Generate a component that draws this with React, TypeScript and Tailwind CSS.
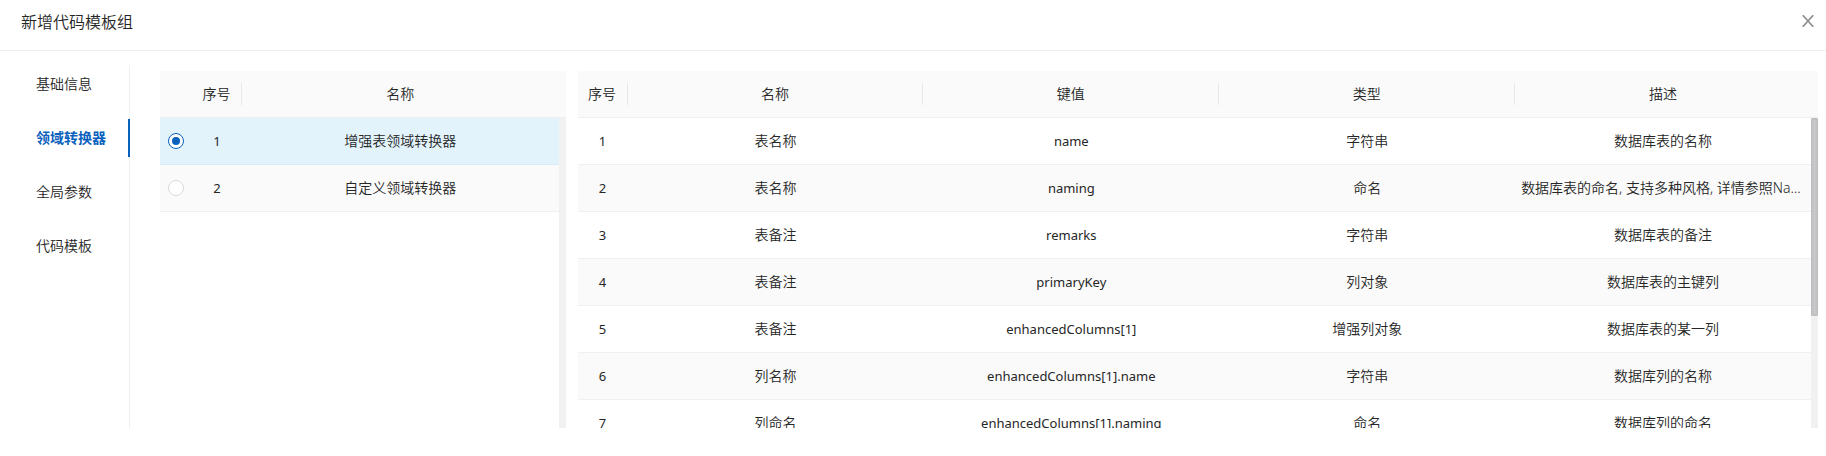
import { useState } from "react";

const tabs = ["基础信息", "领域转换器", "全局参数", "代码模板"];

const converters = [
  { id: 1, name: "增强表领域转换器" },
  { id: 2, name: "自定义领域转换器" },
];

const fields = [
  { id: 1, name: "表名称", key: "name", type: "字符串", desc: "数据库表的名称" },
  { id: 2, name: "表名称", key: "naming", type: "命名", desc: "数据库表的命名, 支持多种风格, 详情参照NamingStrategy" },
  { id: 3, name: "表备注", key: "remarks", type: "字符串", desc: "数据库表的备注" },
  { id: 4, name: "表备注", key: "primaryKey", type: "列对象", desc: "数据库表的主键列" },
  { id: 5, name: "表备注", key: "enhancedColumns[1]", type: "增强列对象", desc: "数据库表的某一列" },
  { id: 6, name: "列名称", key: "enhancedColumns[1].name", type: "字符串", desc: "数据库列的名称" },
  { id: 7, name: "列命名", key: "enhancedColumns[1].naming", type: "命名", desc: "数据库列的命名" },
];

function HeadCell({ label, divider = true }: { label: string; divider?: boolean }) {
  return (
    <th scope="col" className="p-0 font-[350]">
      <div className={`flex h-[22px] items-center justify-center ${divider ? "border-r border-[#e8e8e8]" : ""}`}>
        {label}
      </div>
    </th>
  );
}

function Cell({ children }: { children: React.ReactNode }) {
  return <td className="truncate px-[6px] py-0 text-center">{children}</td>;
}

function LatinCell({ children }: { children: React.ReactNode }) {
  return <td className="truncate px-[6px] py-0 text-center text-[13px] font-normal">{children}</td>;
}

function ConverterColumns() {
  return (
    <colgroup>
      <col className="w-8" />
      <col className="w-[50px]" />
      <col />
    </colgroup>
  );
}

function FieldColumns() {
  return (
    <colgroup>
      <col className="w-[50px]" />
      <col />
      <col />
      <col />
      <col />
    </colgroup>
  );
}

function ConverterTable() {
  const [selected, setSelected] = useState(1);
  return (
    <section aria-label="领域转换器" className="min-w-0">
      <div className="rounded-t-xs border-b border-[#f0f0f0] bg-[#fafafa] pr-[7px]">
        <table className="w-full table-fixed border-collapse">
          <ConverterColumns />
          <thead>
            <tr className="h-[46px]">
              <td />
              <HeadCell label="序号" />
              <HeadCell label="名称" divider={false} />
            </tr>
          </thead>
        </table>
      </div>
      <div className="flex h-[310px]">
        <div className="min-w-0 flex-1 overflow-y-auto [scrollbar-width:none]">
          <table className="w-full table-fixed border-separate border-spacing-0">
            <ConverterColumns />
            <tbody>
              {converters.map((c) => (
                <tr
                  key={c.id}
                  className={
                    selected === c.id
                      ? "h-[47px] bg-[#e2f3fc] *:border-b *:border-[#daeaf7]"
                      : "h-[47px] bg-[#fafafa] *:border-b *:border-[#f0f0f0]"
                  }
                >
                  <td className="p-0">
                    <div className="flex justify-center">
                      <input
                        type="radio"
                        name="converter"
                        aria-label={c.name}
                        checked={selected === c.id}
                        onChange={() => setSelected(c.id)}
                        className="grid size-4 appearance-none place-items-center rounded-full border border-[#d9d9d9] bg-white before:size-2 before:rounded-full checked:border-[#0960bd] checked:before:bg-[#0960bd]"
                      />
                    </div>
                  </td>
                  <LatinCell>{c.id}</LatinCell>
                  <Cell>{c.name}</Cell>
                </tr>
              ))}
            </tbody>
          </table>
        </div>
        <div className="w-[7px] bg-[#f1f1f1]" />
      </div>
    </section>
  );
}

function FieldTable() {
  return (
    <section aria-label="字段" className="col-span-3 min-w-0">
      <div className="rounded-t-xs border-b border-[#f0f0f0] bg-[#fafafa] pr-[7px]">
        <table className="w-full table-fixed border-collapse">
          <FieldColumns />
          <thead>
            <tr className="h-[46px]">
              <HeadCell label="序号" />
              <HeadCell label="名称" />
              <HeadCell label="键值" />
              <HeadCell label="类型" />
              <HeadCell label="描述" divider={false} />
            </tr>
          </thead>
        </table>
      </div>
      <div className="flex h-[310px]">
        <div className="min-w-0 flex-1 overflow-y-auto [scrollbar-width:none]">
          <table className="w-full table-fixed border-separate border-spacing-0">
            <FieldColumns />
            <tbody>
              {fields.map((f) => (
                <tr key={f.id} className="h-[47px] *:border-b *:border-[#f0f0f0] even:bg-[#fafafa]">
                  <LatinCell>{f.id}</LatinCell>
                  <Cell>{f.name}</Cell>
                  <LatinCell>{f.key}</LatinCell>
                  <Cell>{f.type}</Cell>
                  <Cell>{f.desc}</Cell>
                </tr>
              ))}
            </tbody>
          </table>
        </div>
        <div className="w-[7px] bg-[#f1f1f1]">
          <div className="h-[198px] rounded-xs bg-[#c7c8ca] shadow-[inset_0_0_3px_#aaaaaa]" />
        </div>
      </div>
    </section>
  );
}

export default function App() {
  const [active, setActive] = useState(1);
  return (
    <div className="bg-white font-['Noto_Sans','Noto_Sans_CJK_SC',sans-serif] text-sm font-[350] text-[#262626]">
      <header className="flex h-[51px] items-center justify-between border-b border-[#f0f0f0] pr-3 pb-2 pl-[21px]">
        <h1 className="pt-[2px] text-base font-[350]">新增代码模板组</h1>
        <button type="button" aria-label="关闭" className="flex text-[#8c8c8c]">
          <svg width="12" height="12" viewBox="0 0 12 12" fill="none" stroke="currentColor" strokeWidth="1.6">
            <path d="M0.8 0.2L11.2 11.8M11.2 0.2L0.8 11.8" />
          </svg>
        </button>
      </header>
      <main className="flex pt-[14px] pr-2">
        <div role="tablist" aria-orientation="vertical" className="flex w-[130px] shrink-0 flex-col gap-4 border-r border-[#f0f0f0]">
          {tabs.map((t, i) => (
            <button
              key={t}
              type="button"
              role="tab"
              aria-selected={active === i}
              onClick={() => setActive(i)}
              className={
                active === i
                  ? "-mr-px h-[38px] border-r-2 border-[#0960bd] pl-9 text-left font-bold text-[#0960bd]"
                  : "-mr-px h-[38px] border-r-2 border-transparent pl-9 text-left"
              }
            >
              {t}
            </button>
          ))}
        </div>
        <div className="ml-[30px] grid min-w-0 flex-1 grid-cols-4 gap-3 pt-[6px]">
          <ConverterTable />
          <FieldTable />
        </div>
      </main>
    </div>
  );
}
